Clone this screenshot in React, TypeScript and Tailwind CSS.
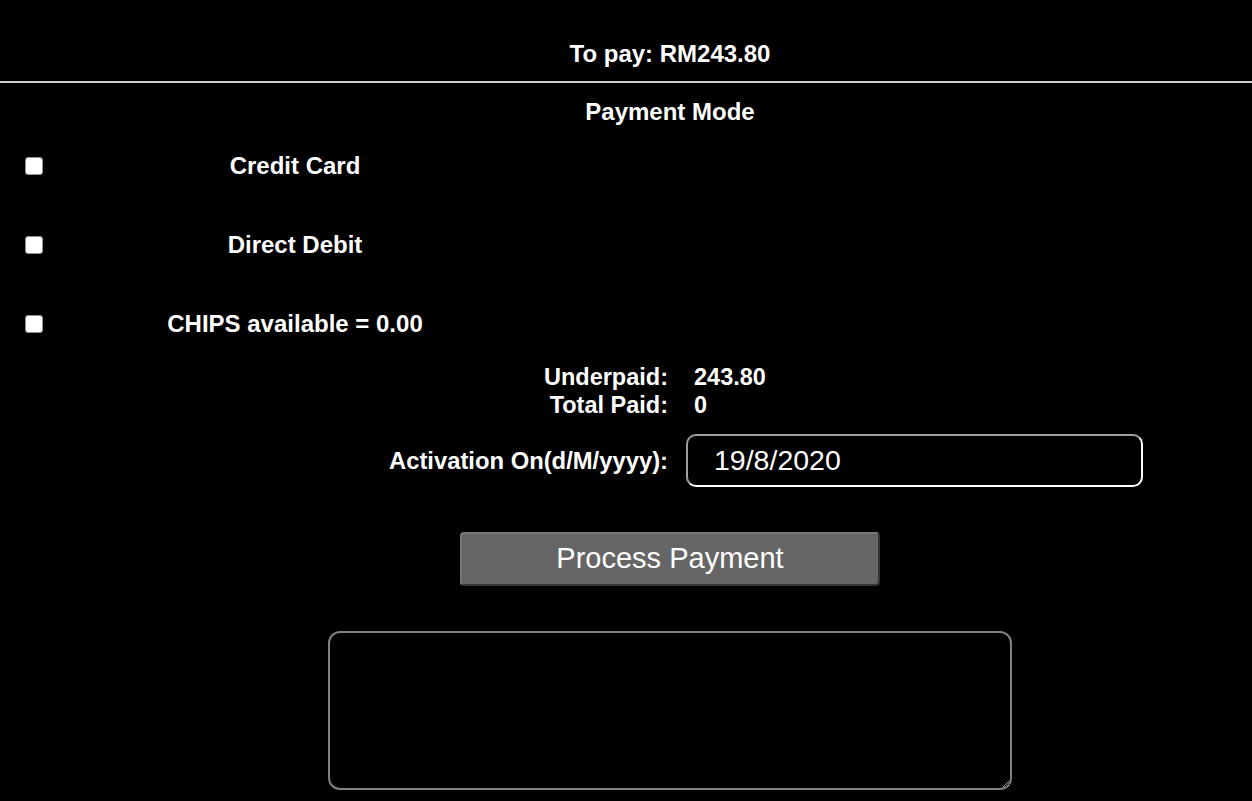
import { useState } from "react";

const modes = ["Credit Card", "Direct Debit", "CHIPS available = 0.00"];

export default function App() {
  const [checked, setChecked] = useState<boolean[]>([false, false, false]);
  const [date, setDate] = useState("19/8/2020");

  return (
    <div className="min-h-screen bg-black text-white font-['Liberation_Sans',Arial,sans-serif]">
      {/* Header */}
      <div className="pt-[40px] pb-[12px] pl-[88px] border-b-2 border-[#d0d0d0] text-center">
        <span className="text-[24px] leading-[28px] font-bold">To pay: RM243.80</span>
      </div>

      {/* Payment mode */}
      <div className="mt-[15px] pl-[88px] text-center text-[24px] leading-[28px] font-bold">
        Payment Mode
      </div>

      <div className="flex flex-col">
        {modes.map((m, i) => (
          <label key={m} className="h-[79px] flex items-center pl-[25px] cursor-pointer">
            <input
              type="checkbox"
              checked={checked[i]}
              onChange={() =>
                setChecked((c) => c.map((v, k) => (k === i ? !v : v)))
              }
              className="appearance-none w-[18px] h-[18px] bg-white rounded-[3px] border border-[#8f8f8f] checked:bg-[#0075ff]"
            />
            <span className="w-[504px] text-center text-[24px] leading-[28px] font-bold">
              {m}
            </span>
          </label>
        ))}
      </div>

      {/* Totals */}
      <div className="flex flex-col text-[23.5px] leading-[28px] font-bold">
        <div className="flex">
          <span className="w-[668px] text-right">Underpaid:</span>
          <span className="ml-[26px]">243.80</span>
        </div>
        <div className="flex">
          <span className="w-[668px] text-right">Total Paid:</span>
          <span className="ml-[26px]">0</span>
        </div>
      </div>

      {/* Activation */}
      <div className="mt-[15px] flex items-center">
        <span className="w-[668px] text-right text-[23.8px] leading-[28px] font-bold">
          Activation On(d/M/yyyy):
        </span>
        <input
          value={date}
          onChange={(e) => setDate(e.target.value)}
          className="ml-[18px] w-[457px] h-[53px] rounded-[10px] border-2 border-white border-t-[#a0a0a0] border-l-[#a0a0a0] bg-black text-white text-[28.5px] pl-[26px] outline-none font-['Liberation_Sans',Arial,sans-serif]"
        />
      </div>

      {/* Button */}
      <div className="mt-[45px] pl-[88px] flex justify-center">
        <button className="w-[420px] h-[54px] rounded-[4px] bg-[#666] border-2 border-[#777] border-r-[#333] border-b-[#333] text-white text-[29px] font-['Liberation_Sans',Arial,sans-serif]">
          Process Payment
        </button>
      </div>

      {/* Notes */}
      <div className="mt-[45px] pl-[88px] flex justify-center">
        <textarea className="w-[684px] h-[159px] rounded-[12px] border-2 border-[#808080] bg-black text-white outline-none" />
      </div>
    </div>
  );
}
